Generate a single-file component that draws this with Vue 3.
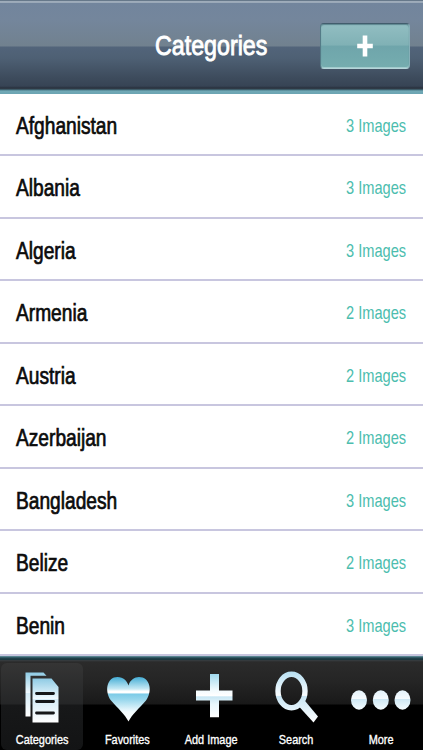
<script setup>
const rows = [
  ['Afghanistan', 3],
  ['Albania', 3],
  ['Algeria', 3],
  ['Armenia', 2],
  ['Austria', 2],
  ['Azerbaijan', 2],
  ['Bangladesh', 3],
  ['Belize', 2],
  ['Benin', 3],
]
</script>

<template>
  <div class="screen">
    <header class="bar">
      <h1 class="title">Categories</h1>
      <button class="add" aria-label="Add">
        <svg width="16" height="22" viewBox="0 0 16 22">
          <path d="M5.700 .5h4.600v8.200h5.500v4.600h-5.500v8.200H5.700v-8.200H.2V8.700h5.500z" fill="#fff" />
        </svg>
      </button>
    </header>

    <ul class="list">
      <li v-for="[name, count] in rows" :key="name" class="row">
        <span class="name">{{ name }}</span>
        <span class="count">{{ count }} Images</span>
      </li>
    </ul>

    <nav class="tabs">
      <a class="tab active">
        <svg class="icon" width="84" height="56" viewBox="0 0 84 56">
          <defs>
            <linearGradient id="page" x1="0" y1="0" x2="0" y2="1">
              <stop offset="0" stop-color="#8fcbe4" />
              <stop offset=".46" stop-color="#f1faff" />
              <stop offset=".47" stop-color="#d5ecf7" />
              <stop offset="1" stop-color="#fff" />
            </linearGradient>
          </defs>
          <path d="M25.500 9.500H43.500l3 3.300H30.500V53.500h-5z" fill="url(#page)" />
          <path d="M32.500 15.500h19l7 8.500v35.500h-26z" fill="url(#page)" />
          <path d="M36.500 30.500h17M36.500 38.500h17M36.500 50h17" stroke="#151719" stroke-width="2.800" stroke-linecap="round" />
        </svg>
        <span class="label">Categories</span>
      </a>
      <a class="tab">
        <svg class="icon" width="84" height="56" viewBox="0 0 84 56">
          <defs>
            <linearGradient id="heart" x1="0" y1="0" x2="0" y2="1">
              <stop offset="0" stop-color="#44add5" />
              <stop offset=".27" stop-color="#c8eaf5" />
              <stop offset=".32" stop-color="#fff" />
              <stop offset=".36" stop-color="#fff" />
              <stop offset=".38" stop-color="#7ccbe7" />
              <stop offset=".5" stop-color="#96d6ec" />
              <stop offset=".78" stop-color="#f2fbfe" />
              <stop offset="1" stop-color="#fff" />
            </linearGradient>
          </defs>
          <path d="M43.500 58.500C40 51.500 32.500 45 26 37.500C19 28 22 14 32.500 14C38.500 14 42 18 43.500 22.500C45 17 49.500 14 54 14C65 14 68 28 61 37.500C54.500 45 47 51.500 43.500 58.500Z" fill="url(#heart)" />
        </svg>
        <span class="label">Favorites</span>
      </a>
      <a class="tab">
        <svg class="icon" width="84" height="56" viewBox="0 0 84 56">
          <defs>
            <linearGradient id="plus" x1="0" y1="0" x2="0" y2="1">
              <stop offset="0" stop-color="#9fd8ed" />
              <stop offset=".38" stop-color="#f2fbfe" />
              <stop offset=".5" stop-color="#fff" />
              <stop offset=".53" stop-color="#c9e7f4" />
              <stop offset=".7" stop-color="#e8f7fd" />
              <stop offset="1" stop-color="#fff" />
            </linearGradient>
          </defs>
          <path d="M41 11h9v16.500h13.500v10H50V54.200h-9V37.500H27v-10h14z" fill="url(#plus)" />
        </svg>
        <span class="label">Add Image</span>
      </a>
      <a class="tab">
        <svg class="icon" width="84" height="56" viewBox="0 0 84 56">
          <defs>
            <linearGradient id="lens" gradientUnits="userSpaceOnUse" x1="0" y1="8" x2="0" y2="60">
              <stop offset="0" stop-color="#b5def1" />
              <stop offset=".47" stop-color="#fafdff" />
              <stop offset=".48" stop-color="#c7e5f4" />
              <stop offset="1" stop-color="#fff" />
            </linearGradient>
          </defs>
          <ellipse cx="37.500" cy="28" rx="13.500" ry="16.700" fill="none" stroke="url(#lens)" stroke-width="5.400" />
          <path d="M49 35.500L64 53.500L59.500 59.500L44.500 43Z" fill="url(#lens)" />
        </svg>
        <span class="label">Search</span>
      </a>
      <a class="tab">
        <svg class="icon" width="84" height="56" viewBox="0 0 84 56">
          <defs>
            <linearGradient id="dot" x1="0" y1="0" x2="0" y2="1">
              <stop offset="0" stop-color="#e4f3fb" />
              <stop offset=".46" stop-color="#f7fcff" />
              <stop offset=".47" stop-color="#cfe8f4" />
              <stop offset="1" stop-color="#f5fcff" />
            </linearGradient>
          </defs>
          <g fill="url(#dot)">
            <ellipse cx="20" cy="37" rx="8" ry="9.700" />
            <ellipse cx="41.800" cy="37" rx="8" ry="9.700" />
            <ellipse cx="63.500" cy="37" rx="8" ry="9.700" />
          </g>
        </svg>
        <span class="label">More</span>
      </a>
    </nav>
  </div>
</template>

<style>
body {
  margin: 0;
  background: #fff;
}
</style>

<style scoped>
.screen {
  display: flex;
  flex-direction: column;
  width: 423px;
  height: 750px;
  overflow: hidden;
  background: #fff;
  font-family: "Liberation Sans", Arial, sans-serif;
}
.bar {
  box-sizing: border-box;
  display: grid;
  grid-template-columns: 1fr auto 1fr;
  align-items: start;
  flex: none;
  height: 93.500px;
  background: linear-gradient(
    #66788a 0, #66788a 1px, #a0adbb 1px, #98a7b7 3px, #72859d 3px,
    #74869c 20px, #71818f 46px, #52647a 47px, #4e6074 58px, #3d4b5c 78px,
    #374455 86px, #29313e 88px, #35424d 89px, #487887 90px, #71a9b6 91px, #6ba4b2 94px
  );
}
.title {
  grid-column: 2;
  width: 114px;
  margin: 29px 0 0;
  font-size: 28.500px;
  font-weight: 400;
  line-height: 32px;
  color: #fff;
  white-space: nowrap;
  -webkit-text-stroke: .9px #fff;
  transform: scaleX(.815);
  transform-origin: 0 50%;
}
.add {
  box-sizing: border-box;
  justify-self: end;
  display: flex;
  align-items: center;
  justify-content: center;
  width: 90px;
  height: 46px;
  margin: 23px 13px 0 0;
  padding: 0;
  border: 1px solid;
  border-color: #425d6d #87b0b8 #b5d6da #547b87;
  border-radius: 4px;
  background: linear-gradient(#92bec2, #80b1b5 48%, #6fa5ab 50%, #75adaf);
  box-shadow: inset 0 1px 1px #5c858f, inset 0 -1px 0 #a2cbcd;
}
.list {
  flex: none;
  margin: 0;
  padding: 0;
  list-style: none;
}
.row {
  box-sizing: border-box;
  display: flex;
  justify-content: space-between;
  height: 62.500px;
  padding: 0 17px 0 16px;
  border-bottom: 2px solid #c8c6df;
}
.name {
  margin-top: 18px;
  font-size: 23.500px;
  line-height: 28px;
  color: #0b0b0b;
  -webkit-text-stroke: .7px #0b0b0b;
  transform: scaleX(.815);
  transform-origin: 0 50%;
}
.count {
  margin-top: 20px;
  font-size: 19px;
  line-height: 24px;
  color: #4cbdae;
  transform: scaleX(.77);
  transform-origin: 100% 50%;
}
.tabs {
  display: grid;
  grid-template-columns: repeat(5, 84.600px);
  flex: none;
  height: 94px;
  background: linear-gradient(
    #6e98a4 0, #416f7c 1px, #23444e 2px, #1a343c 4px, #353a3d 4.500px,
    #2b2b2b 6px, #252525 25px, #191919 48px, #000 49px
  );
}
.tab {
  display: flex;
  flex-direction: column;
  align-items: center;
}
.active {
  margin: 7px 2px 0 1px;
  border-radius: 6px;
  background: linear-gradient(#353535, #252627 41px, #171819 42px, #131415);
}
.icon {
  flex: none;
  overflow: visible;
  margin-top: 7px;
}
.active .icon {
  margin-top: 0;
}
.label {
  margin-top: 13px;
  font-size: 13.300px;
  line-height: 16px;
  white-space: nowrap;
  color: #fff;
  -webkit-text-stroke: .35px #fff;
  transform: scaleX(.82);
}
</style>
